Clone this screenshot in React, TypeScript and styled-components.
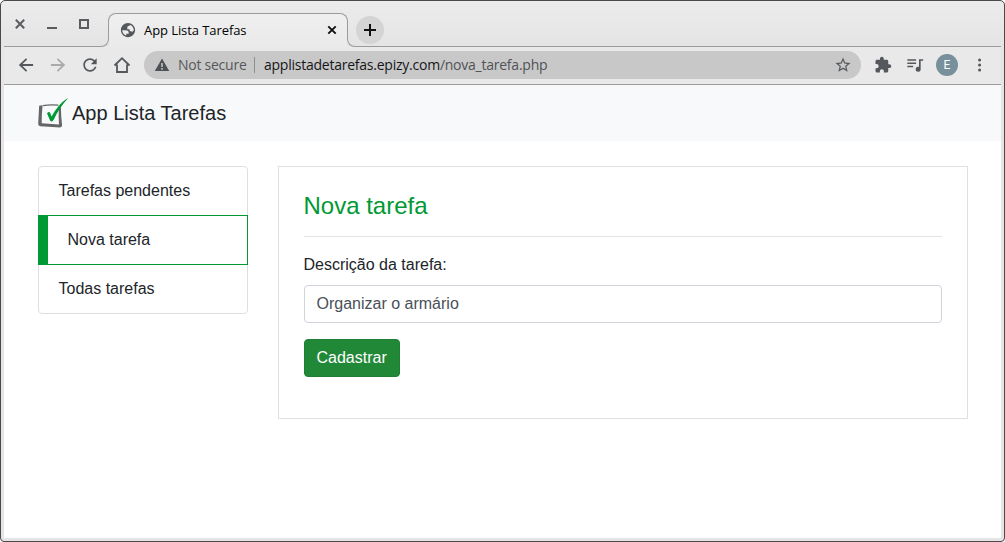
import React from 'react';
import styled, { createGlobalStyle, css } from 'styled-components';

const GlobalStyle = createGlobalStyle`
  *, *::before, *::after { box-sizing: border-box; }
  html, body { margin: 0; background: #fff; }
  body { font-family: "Liberation Sans", Arial, sans-serif; font-size: 16px; line-height: 24px; color: #212529; }
  svg { display: block; flex: none; }
`;

const uiFont = '"Open Sans", "Noto Sans", sans-serif';
const line = '#9b9b9b';

const Window = styled.div`
  width: 1005px;
  height: 542px;
  border: 1px solid #4b4949;
  border-radius: 5px 5px 4px 4px;
  background: linear-gradient(#ececec 0, #e4e4e4 45px, #e6e4e4 46px);
  padding: 0 3px 3px;
  display: flex;
  flex-direction: column;
  overflow: hidden;
`;

const TitleBar = styled.header`
  height: 46px;
  display: flex;
  align-items: flex-start;
  flex: none;
  font-family: ${uiFont};
`;

const WindowControls = styled.div`
  width: 97px;
  height: 46px;
  border-bottom: 1px solid ${line};
  padding: 12px 0 0 10px;
  display: flex;
  gap: 12px;
`;

const TabCurve = styled.div<{ $side: 'left' | 'right' }>`
  width: 8px;
  height: 8px;
  margin-top: 38px;
  flex: none;
  border-bottom: 1px solid ${line};
  ${({ $side }) =>
    $side === 'left'
      ? css`border-right: 1px solid ${line}; border-bottom-right-radius: 8px; margin-right: -1px;`
      : css`border-left: 1px solid ${line}; border-bottom-left-radius: 8px; margin-left: -1px;`}
`;

const Tab = styled.div`
  width: 240px;
  height: 26px;
  margin-top: 12px;
  border: 1px solid ${line};
  border-bottom: 0;
  border-radius: 8px 8px 0 0;
  background: linear-gradient(#efefef, #ebebeb);
  padding: 7px 10px 0 10px;
  display: flex;
  align-items: flex-start;
  position: relative;

  &::after {
    content: '';
    position: absolute;
    left: 0;
    right: 0;
    top: 25px;
    height: 8px;
    background: #ebebeb;
  }
`;

const TabTitle = styled.span`
  color: #000;
  font-size: 13px;
  line-height: 18px;
  letter-spacing: -0.08px;
  margin-left: 7px;
  margin-right: auto;
  white-space: nowrap;
`;

const NewTabArea = styled.div`
  flex: 1;
  height: 46px;
  border-bottom: 1px solid ${line};
  padding: 15px 0 0 1px;
`;

const NewTab = styled.div`
  width: 28px;
  height: 28px;
  border-radius: 50%;
  background: #d4d4d4;
  display: flex;
  align-items: center;
  justify-content: center;
`;

const Toolbar = styled.div`
  height: 38px;
  flex: none;
  border-bottom: 1px solid ${line};
  background: #e9e9e9;
  display: flex;
  align-items: center;
  padding: 0 11px 1px 12px;
  font-family: ${uiFont};
`;

const NavButtons = styled.div`
  display: flex;
  flex: none;
  gap: 12px;
`;

const AddressBar = styled.div`
  width: 717px;
  height: 28px;
  flex: none;
  margin-left: 12px;
  border-radius: 14px;
  background: #c8c8c8;
  display: flex;
  align-items: center;
  padding: 0 9px 0 8px;
  font-size: 14px;
  line-height: 20px;
  white-space: nowrap;
`;

const Security = styled.span`
  width: 76px;
  flex: none;
  margin-left: 6px;
  color: #55585c;
  letter-spacing: -0.25px;
`;

const Divider = styled.span`
  width: 1px;
  height: 16px;
  background: #8d8d8d;
  margin-right: 9px;
`;

const Url = styled.span`
  color: #505357;
  letter-spacing: -0.24px;
  margin-right: auto;
`;

const Host = styled.span`
  color: #161618;
`;

const Actions = styled.div`
  display: flex;
  align-items: center;
  gap: 12px;
  margin-left: 13px;
`;

const Avatar = styled.div`
  width: 22px;
  height: 22px;
  border-radius: 50%;
  background: #78909c;
  color: #fff;
  font: 12px/22px Roboto, sans-serif;
  text-align: center;
`;

const Page = styled.main`
  flex: 1;
  min-height: 0;
  background: #fff;
`;

const Navbar = styled.nav`
  height: 56px;
  background: #f8f9fa;
  padding: 0 34px;
  display: flex;
  align-items: center;
`;

const Brand = styled.span`
  color: #212529;
  font-size: 20px;
  line-height: 30px;
  margin-left: 4px;
`;

const Content = styled.div`
  display: flex;
  align-items: flex-start;
  gap: 30px;
  padding: 25px 33px 0 33.5px;
`;

const Menu = styled.ul`
  width: 210px;
  margin: 0;
  padding: 0;
  list-style: none;
`;

const MenuItem = styled.li<{ $active?: boolean }>`
  height: 50px;
  padding: 12px 20px;
  background: #fff;
  border: 1px solid #dfdfdf;
  &:first-child { border-radius: 4px 4px 0 0; }
  &:last-child { border-radius: 0 0 4px 4px; }
  & + & { margin-top: -1px; }
  ${({ $active }) =>
    $active &&
    css`
      position: relative;
      z-index: 1;
      border-color: #009933;
      border-left-width: 10px;
    `}
`;

const Panel = styled.section`
  flex: 1;
  height: 253px;
  padding: 25px;
  border: 1px solid #dee0e2;
`;

const Title = styled.h4`
  margin: 0;
  height: 28px;
  font-size: 24px;
  line-height: 28px;
  font-weight: 400;
  color: #009933;
`;

const Rule = styled.hr`
  margin: 16px 0;
  border: 0;
  border-top: 1px solid #e3e3e3;
`;

const Label = styled.label`
  display: block;
  margin-bottom: 8px;
`;

const Input = styled.input`
  display: block;
  width: 100%;
  height: 38px;
  padding: 6px 12px;
  border: 1px solid #ced4da;
  border-radius: 4px;
  color: #495057;
  background: #fff;
  font: 16px/24px "Liberation Sans", Arial, sans-serif;
  outline: 0;
`;

const Submit = styled.button`
  display: block;
  height: 38px;
  margin-top: 16px;
  padding: 6px 12px;
  border: 1px solid #1e7e34;
  border-radius: 4px;
  background: #218838;
  color: #fff;
  font: 16px/24px "Liberation Sans", Arial, sans-serif;
`;

const Glyph = ({ d, size = 20, color = '#54575b' }: { d: string; size?: number; color?: string }) => (
  <svg width={size} height={size} viewBox="0 0 24 24" fill={color}><path d={d} /></svg>
);

const BrandMark = () => (
  <svg width="30" height="30" viewBox="0 0 30 30">
    <path d="M1.1 8.6Q1 7.6 2 7.5L4.6 7.2Q3.6 16 3.7 25.3L21 26.6Q20.4 17 20.8 10.6L22.9 8.4Q22.9 17 24.1 27.2Q24.1 29.2 22 29.5L2.4 28.2Q0.1 28 0.2 26Z" fill="#666" />
    <path d="M5 7.7Q12 6.2 20.4 7.2" fill="none" stroke="#666" strokeWidth="1.2" />
    <path d="M9 15.2Q11 13 12 14.5L13.6 18.5Q20.5 6 29.4 0.3L29.8 0.6Q21.5 9.5 15.8 21.5Q14.2 24.9 12.2 22.8Z" fill="#009933" />
  </svg>
);

const App = () => (
  <>
    <GlobalStyle />
    <Window>
      <TitleBar>
        <WindowControls>
          <svg width="80" height="24" viewBox="0 0 80 24" fill="none" stroke="#595d61">
            <path d="M1.8 6.8l8.4 8.4M10.2 6.8L1.8 15.2" strokeWidth="2" />
            <path d="M33 15h10" strokeWidth="2" />
            <path d="M66 7h8v8h-8z" strokeWidth="2" />
          </svg>
        </WindowControls>
        <TabCurve $side="left" />
        <Tab>
          <Glyph size={18} d="M12 2.5C6.75 2.5 2.5 6.75 2.5 12s4.25 9.5 9.5 9.5 9.5-4.25 9.5-9.5S17.25 2.5 12 2.5zM4.3 12.3h4.4c3.41.02 4.61 1.43 4.2 4.73H9.76v2.2C6.5 18.3 4.3 15.8 4.3 12.3zm15.4.2C19 13.8 18 13.9 16.5 13.9c-2.3 0-2.5-1.6-2.5-2.9h-2.9V8.5c0-1.4 1-1.9 2.9-1.9V5.1c3.6.8 5.7 3.8 5.7 7.4z" />
          <TabTitle>App Lista Tarefas</TabTitle>
          <svg width="10" height="18" viewBox="0 0 10 18" stroke="#111" strokeWidth="1.9"><path d="M1.3 5.3l7.4 7.4M8.7 5.3l-7.4 7.4" /></svg>
        </Tab>
        <TabCurve $side="right" />
        <NewTabArea>
          <NewTab>
            <svg width="12" height="12" viewBox="0 0 12 12" stroke="#111" strokeWidth="2"><path d="M6 0v12M0 6h12" /></svg>
          </NewTab>
        </NewTabArea>
      </TitleBar>
      <Toolbar>
        <NavButtons>
          <Glyph d="M20.5 10.9H7.83l5.59-5.49L12 3.8l-8.6 8.2 8.6 8.2 1.41-1.61L7.83 13.1H20.5v-2.2z" />
          <Glyph color="#aaa" d="M12 3.8l-1.41 1.61L16.17 10.9H3.5v2.2h12.67l-5.58 5.49L12 20.2l8.6-8.2z" />
          <Glyph d="M17.65 6.35C16.2 4.9 14.21 4 12 4c-4.42 0-7.99 3.58-7.99 8s3.57 8 7.99 8c3.73 0 6.84-2.55 7.73-6h-2.08c-.82 2.33-3.04 4-5.65 4-3.31 0-6-2.69-6-6s2.69-6 6-6c1.66 0 3.14.69 4.22 1.78L13 11h7V4l-2.35 2.35z" />
          <svg width="20" height="20" viewBox="0 0 20 20" fill="none" stroke="#54575b" strokeWidth="1.8"><path d="M2.5 10.5L10 3.2l7.5 7.3M5 9.5V17h10V9.5" /></svg>
        </NavButtons>
        <AddressBar>
          <svg width="20" height="20" viewBox="0 0 20 20"><path d="M10 3.5L17.2 16H2.8z" fill="#4d5054" /><path d="M10 8v4M10 13v1.7" stroke="#c8c8c8" strokeWidth="1.5" /></svg>
          <Security>Not secure</Security>
          <Divider />
          <Url><Host>applistadetarefas.epizy.com</Host>/nova_tarefa.php</Url>
          <Glyph size={18} d="M22 9.24l-7.19-.62L12 2 9.19 8.63 2 9.24l5.46 4.73L5.82 21 12 17.27 18.18 21l-1.63-7.03L22 9.24zM12 15.4l-3.76 2.27 1-4.28-3.32-2.88 4.38-.38L12 6.1l1.71 4.04 4.38.38-3.32 2.88 1 4.28L12 15.4z" />
        </AddressBar>
        <Actions>
          <Glyph size={18} d="M20.5 11H19V7c0-1.1-.9-2-2-2h-4V3.5C13 2.12 11.88 1 10.5 1S8 2.12 8 3.5V5H4c-1.1 0-1.99.9-1.99 2v3.8H3.5c1.49 0 2.7 1.21 2.7 2.7s-1.21 2.7-2.7 2.7H2V20c0 1.1.9 2 2 2h3.8v-1.5c0-1.49 1.21-2.7 2.7-2.7 1.49 0 2.7 1.21 2.7 2.7V22H17c1.1 0 2-.9 2-2v-4h1.5c1.38 0 2.5-1.12 2.5-2.5S21.88 11 20.5 11z" />
          <Glyph d="M14.5 5H4v1.8h10.5zM14.5 9H4v1.8h10.5zM4 13v1.8h7V13zM18 5v9.2c-.3-.1-.6-.2-1-.2a3 3 0 1 0 3 3V6.8h3V5z" />
          <Avatar>E</Avatar>
          <Glyph d="M11.5 7.7a1.8 1.8 0 1 0 0-3.6 1.8 1.8 0 0 0 0 3.6zM11.5 13.8a1.8 1.8 0 1 0 0-3.6 1.8 1.8 0 0 0 0 3.6zM11.5 19.9a1.8 1.8 0 1 0 0-3.6 1.8 1.8 0 0 0 0 3.6z" />
        </Actions>
      </Toolbar>
      <Page>
        <Navbar>
          <BrandMark />
          <Brand>App Lista Tarefas</Brand>
        </Navbar>
        <Content>
          <Menu>
            <MenuItem>Tarefas pendentes</MenuItem>
            <MenuItem $active>Nova tarefa</MenuItem>
            <MenuItem>Todas tarefas</MenuItem>
          </Menu>
          <Panel>
            <Title>Nova tarefa</Title>
            <Rule />
            <Label htmlFor="descricao">Descrição da tarefa:</Label>
            <Input id="descricao" defaultValue="Organizar o armário" />
            <Submit type="button">Cadastrar</Submit>
          </Panel>
        </Content>
      </Page>
    </Window>
  </>
);

export default App;
